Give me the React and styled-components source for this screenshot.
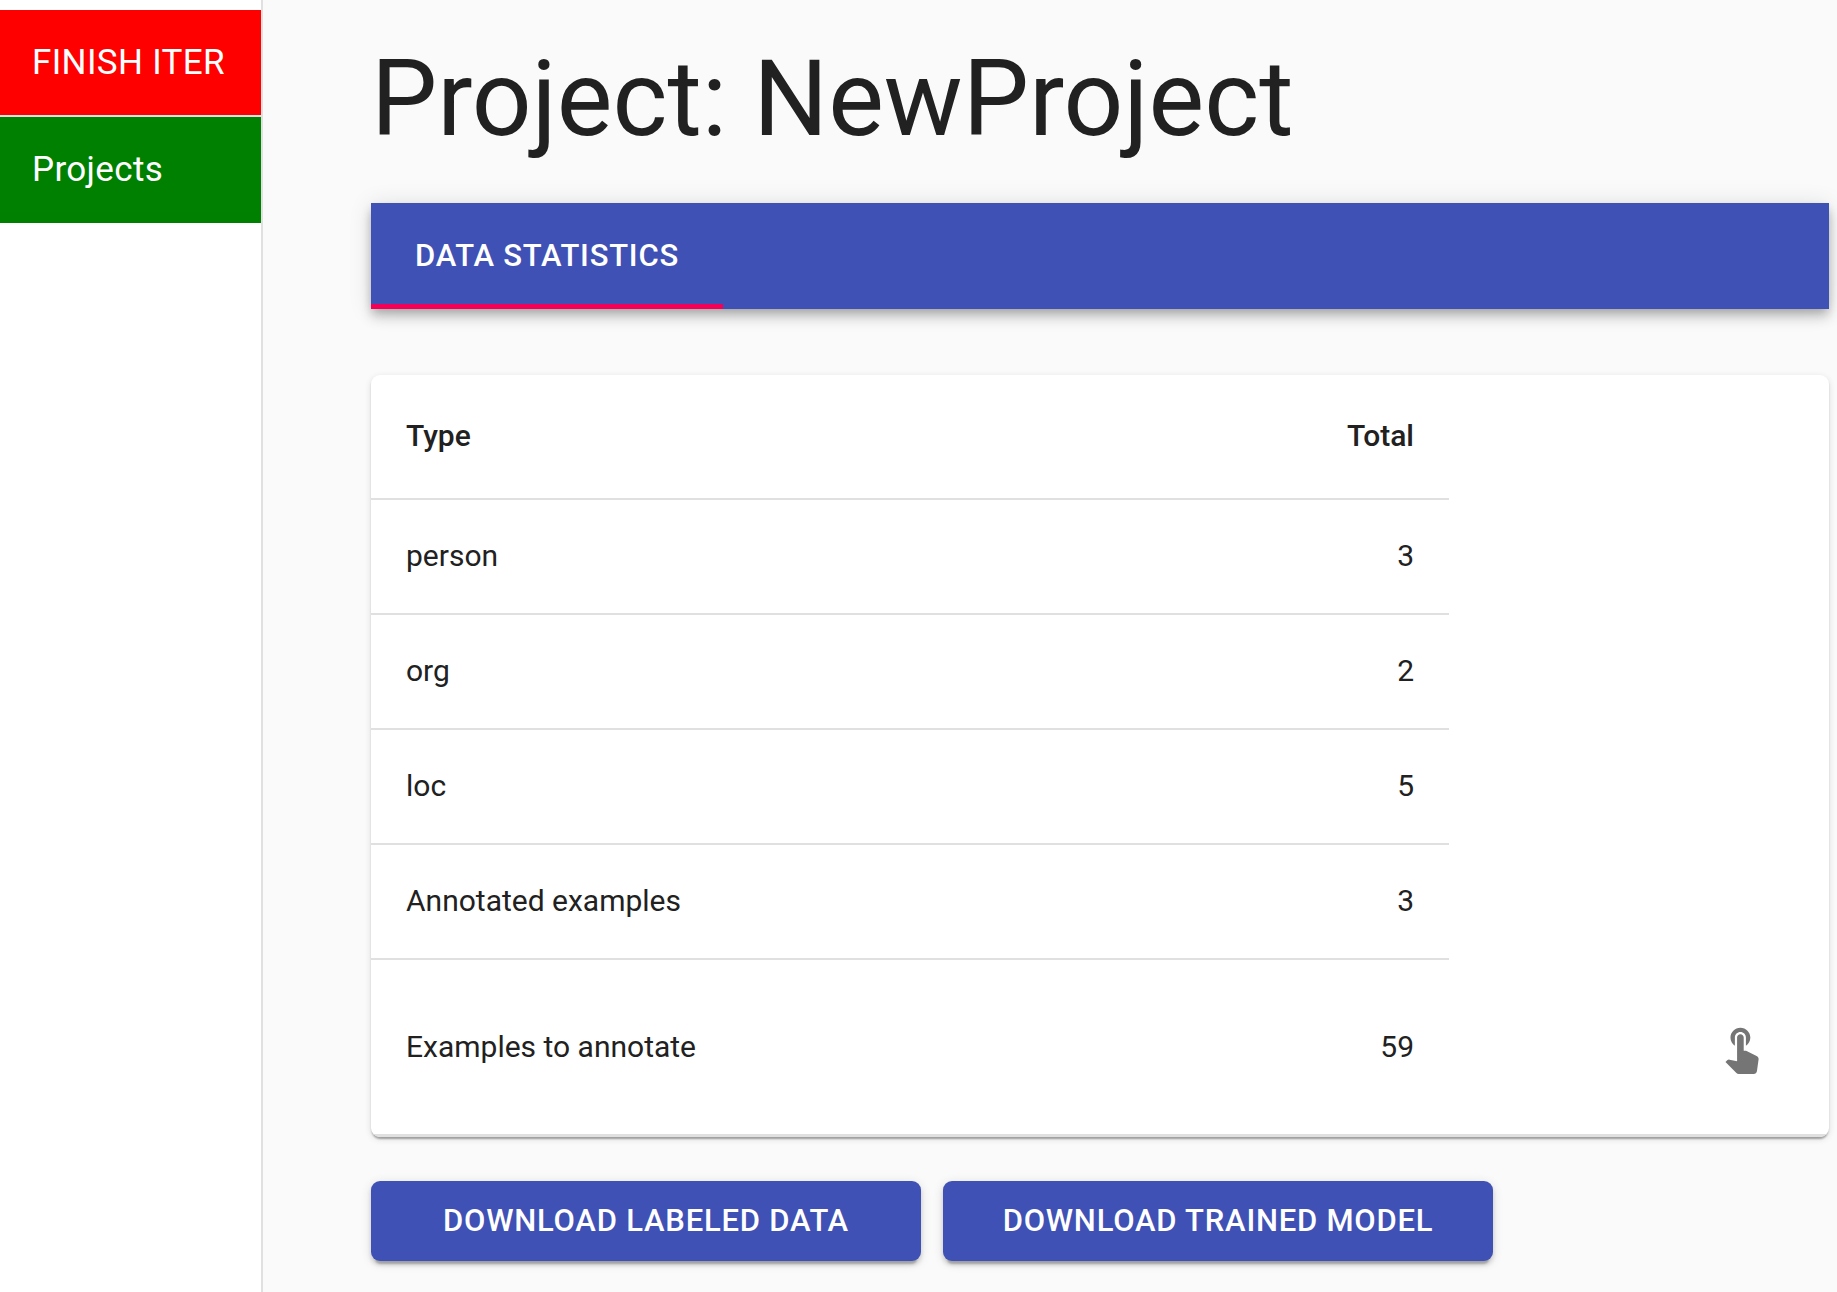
import React from "react";
import styled, { createGlobalStyle } from "styled-components";

const GlobalStyle = createGlobalStyle`
  *, *::before, *::after {
    box-sizing: border-box;
  }

  body {
    margin: 0;
    background: #fafafa;
    color: #212121;
    font-family: Roboto, "Liberation Sans", sans-serif;
    font-size: 31px;
    line-height: 44px;
  }

  button {
    font: inherit;
    border: 0;
    cursor: pointer;
  }
`;

const Page = styled.div`
  display: flex;
  min-height: 100vh;
`;

const Sidebar = styled.nav`
  flex: 0 0 263px;
  display: flex;
  flex-direction: column;
  padding-top: 10px;
  background: #fff;
  border-right: 2px solid #e0e0e0;
`;

const NavAction = styled.button`
  min-height: 105px;
  padding: 0 32px;
  background: ${({ $tone }) => $tone};
  color: #fff;
  font-size: 35px;
  letter-spacing: 0.01em;
  text-align: left;
  white-space: nowrap;

  & + & {
    border-top: 2px solid #e0e0e0;
    min-height: 108px;
  }
`;

const Main = styled.main`
  flex: 1;
  min-width: 0;
  padding: 38px 8px 30px 108px;
`;

const Title = styled.h1`
  margin: 0 0 42px;
  font-size: 105px;
  font-weight: 400;
  line-height: 123px;
`;

const TabBar = styled.div`
  display: flex;
  background: #3f51b5;
  box-shadow: 0 4px 9px -2px rgba(0, 0, 0, 0.2),
    0 9px 11px 0 rgba(0, 0, 0, 0.14), 0 2px 22px 0 rgba(0, 0, 0, 0.12);
`;

const Tab = styled.button`
  min-width: 352px;
  height: 106px;
  padding: 0 26px;
  background: transparent;
  color: #fff;
  font-weight: 500;
  letter-spacing: 0.025em;
  text-transform: uppercase;
  box-shadow: inset 0 -5px 0 ${({ $selected }) => ($selected ? "#f50057" : "transparent")};
`;

const Card = styled.section`
  margin: 66px 0 44px;
  background: #fff;
  border-radius: 9px;
  overflow: hidden;
  box-shadow: 0 4px 2px -2px rgba(0, 0, 0, 0.2),
    0 2px 2px 0 rgba(0, 0, 0, 0.14), 0 2px 7px 0 rgba(0, 0, 0, 0.12);
`;

const Table = styled.table`
  width: 100%;
  table-layout: fixed;
  border-collapse: separate;
  border-spacing: 0;
  font-size: 30px;
`;

const TypeColumn = styled.col`
  width: 50%;
`;

const ActionColumn = styled.col`
  width: 380px;
`;

const HeadCell = styled.th`
  height: 125px;
  padding: 0 35px 2px;
  border-bottom: 2px solid #e0e0e0;
  font-weight: 500;
  text-align: ${({ $align }) => $align || "left"};
`;

const Cell = styled.td`
  height: 115px;
  padding: 0 35px 2px;
  border-bottom: 2px solid #e0e0e0;
  text-align: ${({ $align }) => $align || "left"};

  tr:last-child > & {
    height: 177px;
    padding-bottom: 0;
    border-bottom-width: 3px;
  }
`;

const IconButton = styled.button`
  display: inline-flex;
  padding: 26px;
  border-radius: 50%;
  background: transparent;
  color: #757575;
  vertical-align: middle;
`;

const Icon = styled.svg`
  width: 53px;
  height: 53px;
  fill: currentColor;
`;

const Actions = styled.div`
  display: flex;
  flex-wrap: wrap;
  gap: 22px;
`;

const ActionButton = styled.button`
  width: 550px;
  height: 80px;
  padding: 0 35px;
  border-radius: 9px;
  background: #3f51b5;
  color: #fff;
  font-weight: 500;
  letter-spacing: 0.025em;
  text-transform: uppercase;
  white-space: nowrap;
  box-shadow: 0 7px 2px -4px rgba(0, 0, 0, 0.2),
    0 4px 4px 0 rgba(0, 0, 0, 0.14), 0 2px 11px 0 rgba(0, 0, 0, 0.12);
`;

const rows = [
  { type: "person", total: 3 },
  { type: "org", total: 2 },
  { type: "loc", total: 5 },
  { type: "Annotated examples", total: 3 },
  { type: "Examples to annotate", total: 59, canAnnotate: true },
];

function TouchIcon() {
  return (
    <Icon viewBox="0 0 24 24" aria-hidden="true">
      <path d="M9 11.24V7.5C9 6.12 10.12 5 11.5 5S14 6.12 14 7.5v3.74c1.21-.81 2-2.18 2-3.74C16 5.01 13.99 3 11.5 3S7 5.01 7 7.5c0 1.56.79 2.93 2 3.74zm9.84 4.63l-4.54-2.26c-.17-.07-.35-.11-.54-.11H13v-6c0-.83-.67-1.5-1.5-1.5S10 6.67 10 7.5v10.74l-3.43-.72c-.08-.01-.15-.03-.24-.03-.31 0-.59.13-.79.33l-.79.8 4.94 4.94c.27.27.65.44 1.06.44h6.79c.75 0 1.33-.55 1.44-1.28l.75-5.27c.01-.07.02-.14.02-.2 0-.62-.38-1.16-.91-1.38z" />
    </Icon>
  );
}

export default function App() {
  return (
    <>
      <GlobalStyle />
      <Page>
        <Sidebar>
          <NavAction type="button" $tone="#ff0000">FINISH ITER</NavAction>
          <NavAction type="button" $tone="#008000">Projects</NavAction>
        </Sidebar>
        <Main>
          <Title>Project: NewProject</Title>
          <TabBar role="tablist">
            <Tab type="button" role="tab" aria-selected="true" $selected>
              Data statistics
            </Tab>
          </TabBar>
          <Card>
            <Table>
              <colgroup>
                <TypeColumn />
                <col />
                <ActionColumn />
              </colgroup>
              <thead>
                <tr>
                  <HeadCell scope="col">Type</HeadCell>
                  <HeadCell scope="col" $align="right">Total</HeadCell>
                </tr>
              </thead>
              <tbody>
                {rows.map(({ type, total, canAnnotate }) => (
                  <tr key={type}>
                    <Cell>{type}</Cell>
                    <Cell $align="right">{total}</Cell>
                    {canAnnotate && (
                      <Cell $align="right">
                        <IconButton type="button" aria-label="Annotate">
                          <TouchIcon />
                        </IconButton>
                      </Cell>
                    )}
                  </tr>
                ))}
              </tbody>
            </Table>
          </Card>
          <Actions>
            <ActionButton type="button">Download labeled data</ActionButton>
            <ActionButton type="button">Download trained model</ActionButton>
          </Actions>
        </Main>
      </Page>
    </>
  );
}
